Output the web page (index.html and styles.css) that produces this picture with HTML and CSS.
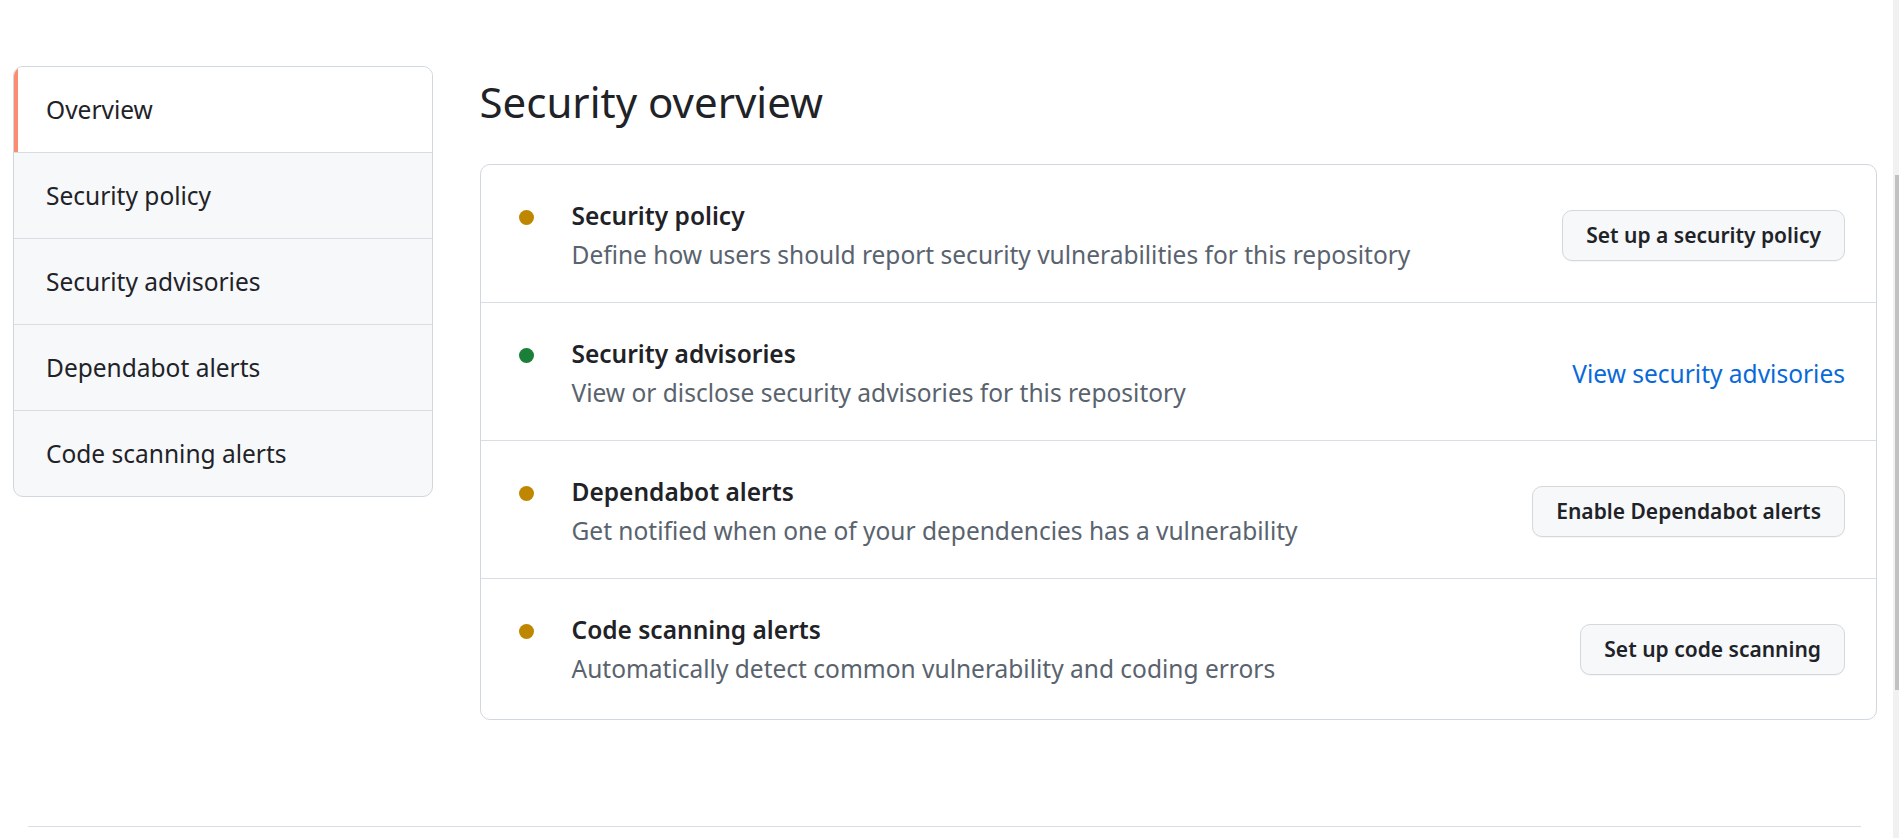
FILE: index.html
```html
<!DOCTYPE html>
<html lang="en">
<head>
    <meta charset="UTF-8">
    <meta name="viewport" content="width=device-width, initial-scale=1.0">
    <title>Security overview</title>
    <link rel="stylesheet" href="styles.css">
</head>
<body>
    <div class="page">
        <div class="layout">
            <nav class="menu">
                <a class="menu-item selected" href="#">Overview</a>
                <a class="menu-item" href="#">Security policy</a>
                <a class="menu-item" href="#">Security advisories</a>
                <a class="menu-item" href="#">Dependabot alerts</a>
                <a class="menu-item" href="#">Code scanning alerts</a>
            </nav>

            <main class="content">
                <h1 class="subhead">Security overview</h1>

                <div class="box">
                    <div class="box-row">
                        <span class="dot dot-attention"></span>
                        <div class="info">
                            <div class="info-title">Security policy</div>
                            <div class="info-desc">Define how users should report security vulnerabilities for this repository</div>
                        </div>
                        <button class="btn">Set up a security policy</button>
                    </div>
                    <div class="box-row">
                        <span class="dot dot-success"></span>
                        <div class="info">
                            <div class="info-title">Security advisories</div>
                            <div class="info-desc">View or disclose security advisories for this repository</div>
                        </div>
                        <a class="link" href="#">View security advisories</a>
                    </div>
                    <div class="box-row">
                        <span class="dot dot-attention"></span>
                        <div class="info">
                            <div class="info-title">Dependabot alerts</div>
                            <div class="info-desc">Get notified when one of your dependencies has a vulnerability</div>
                        </div>
                        <button class="btn">Enable Dependabot alerts</button>
                    </div>
                    <div class="box-row">
                        <span class="dot dot-attention"></span>
                        <div class="info">
                            <div class="info-title">Code scanning alerts</div>
                            <div class="info-desc">Automatically detect common vulnerability and coding errors</div>
                        </div>
                        <button class="btn">Set up code scanning</button>
                    </div>
                </div>
            </main>
        </div>

        <footer class="footer"></footer>
    </div>

    <div class="scrollbar">
        <div class="scrollbar-thumb"></div>
    </div>
</body>
</html>
```

FILE: styles.css
```css
html, body {
    height: 100%;
    overflow: hidden;
}
body {
    margin: 0;
    display: flex;
    font-family: "Noto Sans", "Open Sans", sans-serif;
    font-size: 24.5px;
    color: #1f2328;
    background-color: #ffffff;
}
.page {
    flex: 1;
    padding: 66px 16px 0 13px;
}
.layout {
    display: flex;
    gap: 46.5px;
    align-items: flex-start;
}

/* side menu */
.menu {
    flex: none;
    box-sizing: border-box;
    width: 420px;
    display: flex;
    flex-direction: column;
    border: 1px solid #d0d7de;
    border-radius: 10px;
    background-color: #f6f8fa;
    overflow: hidden;
}
.menu-item {
    display: block;
    padding: 24px 32px;
    line-height: 37px;
    color: #1f2328;
    text-decoration: none;
    border-bottom: 1px solid #d8dee4;
}
.menu-item:last-child {
    border-bottom: none;
}
.menu-item.selected {
    background-color: #ffffff;
    box-shadow: inset 4px 0 0 #fd8c73;
}

/* main column */
.content {
    flex: 1;
    min-width: 0;
}
.subhead {
    margin: 9px 0 36px;
    font-size: 42px;
    font-weight: 400;
    line-height: 53px;
}
.box {
    border: 1px solid #d0d7de;
    border-radius: 10px;
}
.box-row {
    display: flex;
    align-items: center;
    padding: 31px 31px 28px;
    border-bottom: 1px solid #d8dee4;
}
.box-row:last-child {
    padding-bottom: 31px;
    border-bottom: none;
}
.dot {
    flex: none;
    align-self: flex-start;
    width: 15px;
    height: 15px;
    margin: 14px 38px 0 7px;
    border-radius: 50%;
}
.dot-attention {
    background-color: #bf8700;
}
.dot-success {
    background-color: #1a7f37;
}
.info {
    flex: 1;
    line-height: 39px;
}
.info-title {
    font-weight: 600;
}
.info-desc {
    color: #59636e;
}
.btn {
    flex: none;
    height: 51px;
    padding: 0 23px;
    font-family: inherit;
    font-size: 21px;
    font-weight: 600;
    color: #1f2328;
    background-color: #f6f8fa;
    border: 1px solid #d5d8da;
    border-radius: 10px;
    box-shadow: 0 1px 0 rgba(31, 35, 40, 0.04);
    cursor: pointer;
}
.link {
    flex: none;
    color: #0969da;
    text-decoration: none;
}

.footer {
    margin: 106px 16px 0 15px;
    height: 200px;
    border-top: 1px solid #d8dee4;
}

/* fake scrollbar, the page is taller than the window */
.scrollbar {
    flex: none;
    width: 6px;
    height: 100%;
    background-color: #f1f1f1;
}
.scrollbar-thumb {
    width: 4px;
    height: 515px;
    margin: 175px 0 0 2px;
    background-color: #c1c1c1;
}
```
